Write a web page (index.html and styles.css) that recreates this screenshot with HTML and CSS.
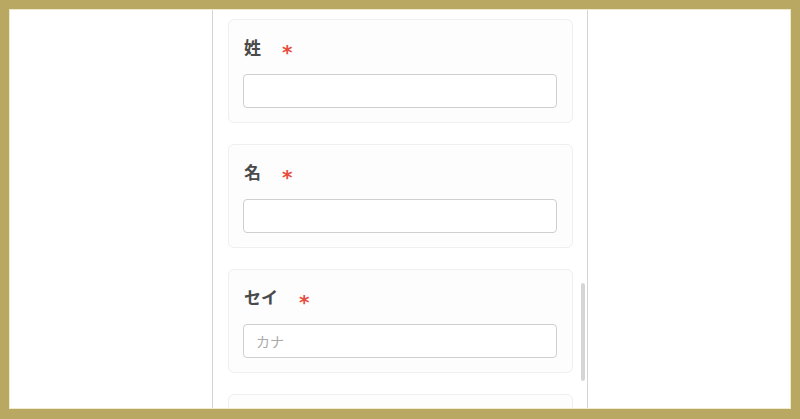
FILE: index.html
```html
<!DOCTYPE html>
<html lang="ja">
<head>
  <meta charset="UTF-8" />
  <meta name="viewport" content="width=device-width, initial-scale=1.0"/>
  <title>お名前入力</title>
  <link rel="stylesheet" href="styles.css">
</head>
<body>
<div class="frame">
  <div class="panel">
    <form class="form">
      <div class="card">
        <label for="sei">姓<span class="req">*</span></label>
        <input type="text" id="sei" name="sei"/>
      </div>
      <div class="card">
        <label for="mei">名<span class="req">*</span></label>
        <input type="text" id="mei" name="mei"/>
      </div>
      <div class="card">
        <label for="sei_kana">セイ<span class="req">*</span></label>
        <input type="text" id="sei_kana" name="sei_kana" placeholder="カナ"/>
      </div>
      <div class="card"></div>
    </form>
    <div class="scrollbar"></div>
  </div>
</div>
</body>
</html>
```

FILE: styles.css
```css
html, body {
  height: 100%;
}
body {
  margin: 0;
  background: #b9a862;
  font-family: "Noto Sans CJK JP", "Noto Sans", sans-serif;
  overflow: hidden;
}
.frame {
  box-sizing: border-box;
  margin: 9px 9px 0 9px;
  height: 400px;
  background: #fff;
  border: 1px solid #f1e9cc;
  display: flex;
  justify-content: center;
  overflow: hidden;
}
.panel {
  position: relative;
  box-sizing: border-box;
  width: 376px;
  border-left: 1px solid #d4d4d4;
  border-right: 1px solid #d4d4d4;
  padding: 9px 14px 0 15px;
}
.card {
  box-sizing: border-box;
  height: 104px;
  margin-bottom: 21px;
  padding: 14px 15px 15px 14px;
  background: #fdfdfd;
  border: 1px solid #efefef;
  border-radius: 6px;
}
.card:nth-child(n+3) {
  margin-top: 1px;
}
label {
  display: block;
  height: 25px;
  padding-left: 1px;
  font-size: 17px;
  font-weight: bold;
  line-height: 25px;
  color: #4a4a4a;
}
.req {
  margin-left: 21px;
  color: #e74c3c;
  font-family: "DejaVu Sans", sans-serif;
  font-size: 20px;
  font-weight: bold;
  line-height: 0;
  vertical-align: -5px;
}
input[type="text"] {
  display: block;
  box-sizing: border-box;
  width: 100%;
  height: 34px;
  margin-top: 15px;
  padding: 0 12px;
  border: 1px solid #cfcfcf;
  border-radius: 4px;
  background: #fff;
  font-family: inherit;
  font-size: 14px;
}
input::placeholder {
  color: #aaa;
}
.scrollbar {
  position: absolute;
  top: 273px;
  right: 2px;
  width: 4px;
  height: 98px;
  border-radius: 2px;
  background: #d6d6d6;
}
```
